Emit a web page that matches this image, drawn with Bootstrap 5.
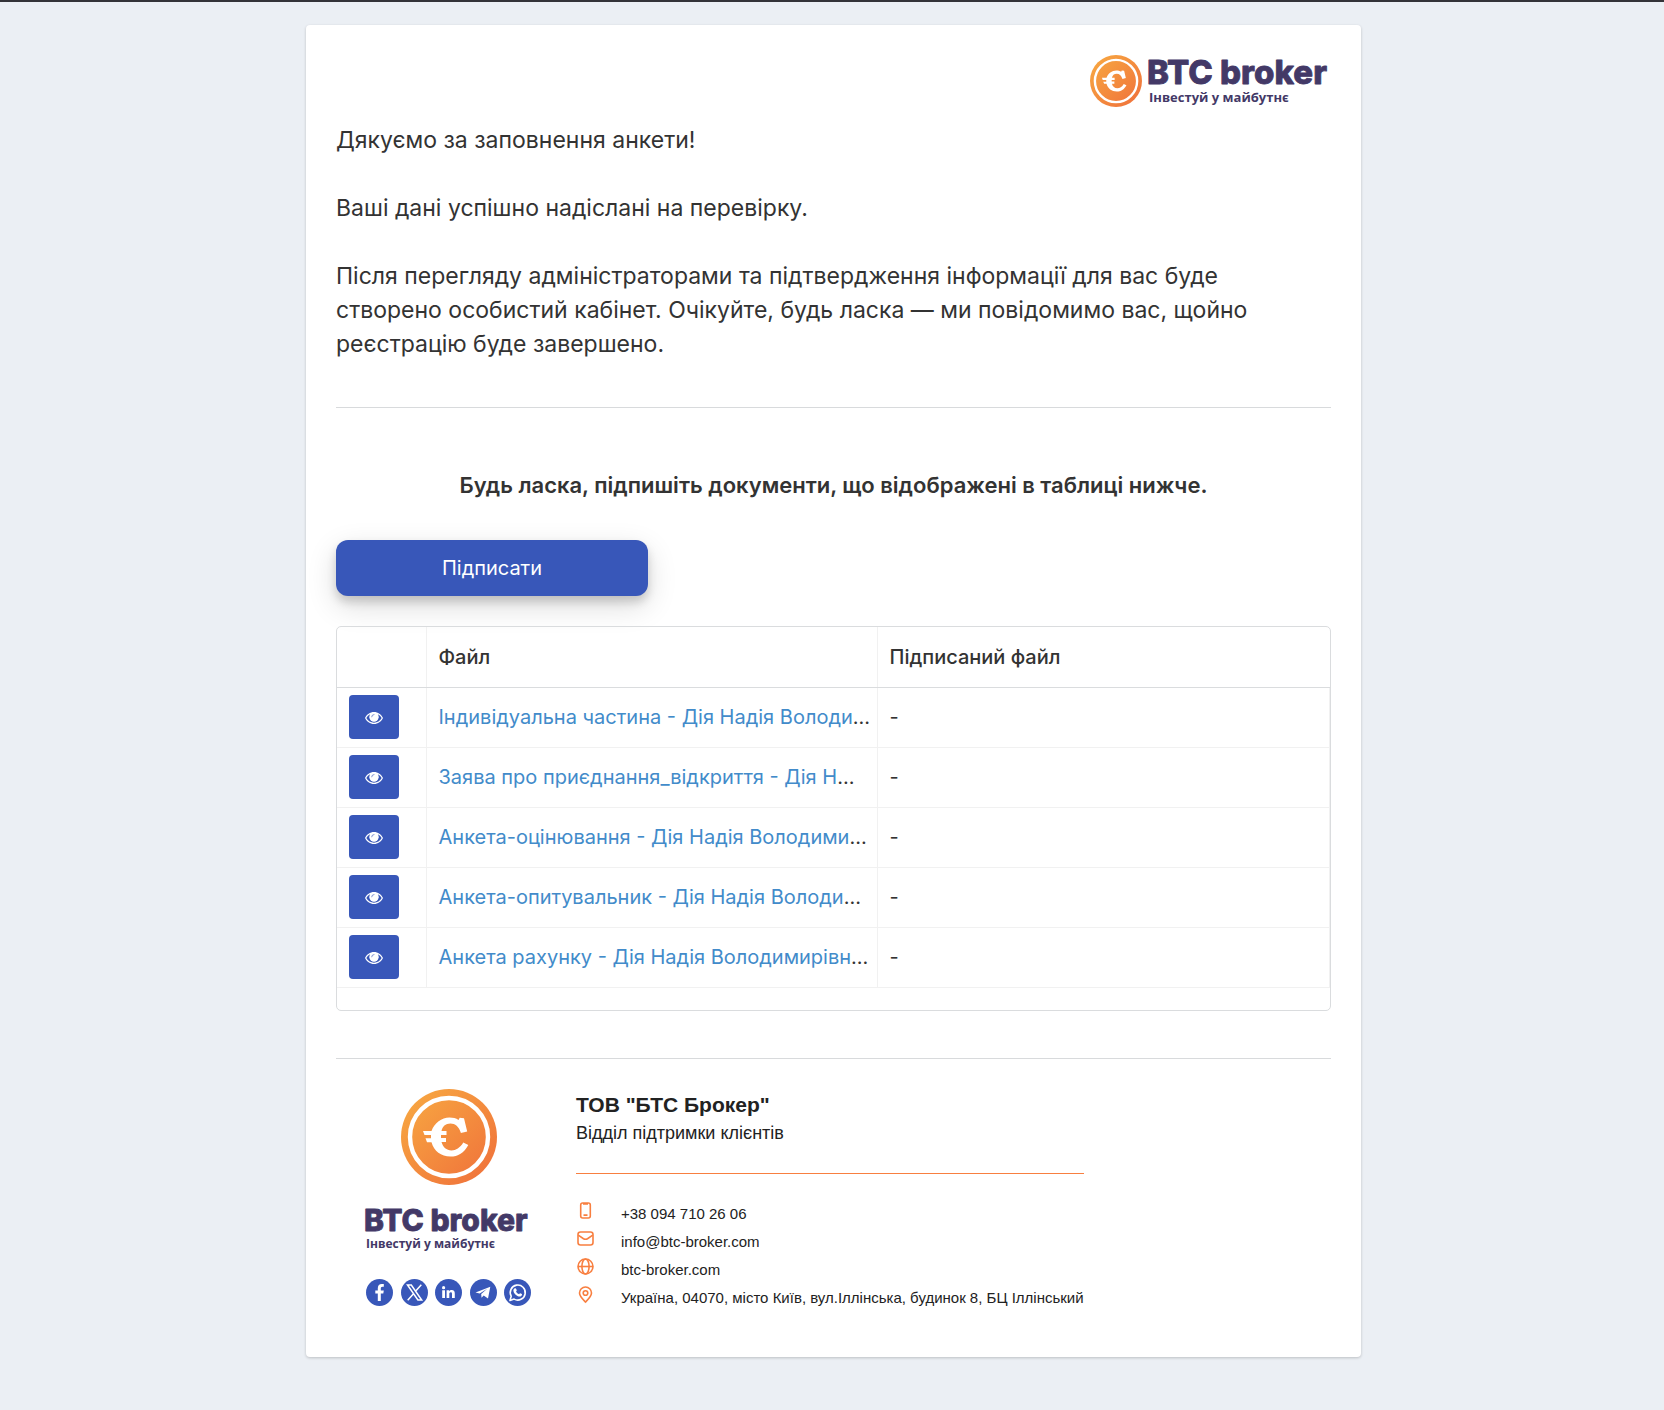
<!DOCTYPE html>
<html lang="uk">
<head>
<meta charset="utf-8">
<meta name="viewport" content="width=device-width, initial-scale=1">
<title>BTC broker</title>
<link href="https://cdn.jsdelivr.net/npm/bootstrap@5.3.0/dist/css/bootstrap.min.css" rel="stylesheet">
<style>
body{background:#ebeff4;color:#333;font-family:Inter,"Noto Sans",sans-serif;font-weight:400;border-top:2px solid #333338;min-height:100vh}
.page{padding:23px 22px 53px 25px}
.sheet{max-width:1055px;background:#fff;border-radius:4px;padding:30px 30px 45px;box-shadow:0 1px 3px rgba(0,0,0,.2)}
.intro{font-size:23px;line-height:34px;padding-top:14px;max-width:940px}
.intro p{margin-bottom:34px}
.rule{height:1px;border:0;margin:0;background:#d8dadc;opacity:1}
.intro + .rule{margin-top:46px}
.ask{font-size:22px;line-height:34px;font-weight:600;margin:60px 0 38px}
.btn-brand{background:#3857b9;color:#fff;border:0;font-weight:400}
.btn-brand:hover{background:#2d4799;color:#fff}
.btn-sign{width:312px;max-width:100%;height:56px;font-size:20px;border-radius:12px;margin-bottom:30px;box-shadow:0 10px 30px rgba(0,0,0,.14),0 6px 10px rgba(0,0,0,.16)}
.btn-eye{width:50px;height:44px;border-radius:4px;padding:0}
.btn-eye svg{margin-top:-2px}
.grid-box{border:1px solid #dadcde;border-radius:5px;padding-bottom:22px;margin-bottom:47px}
.files{table-layout:fixed;width:100%;font-size:20px;line-height:28px}
.files th,.files td{height:60px;padding:0 12px;border-bottom:1px solid #f1f1f1;border-right:1px solid #f1f1f1}
.files th:last-child{border-right:0}
.files th{font-weight:500;border-bottom-color:#dadcde}
.files a{color:#428bca;text-decoration:none}
.files .c-eye{width:89px}
.files .c-file{width:451px}
.logo{overflow:visible}
.wordmark{font-family:Inter,sans-serif;font-weight:800;fill:#433967;stroke:#433967;stroke-linejoin:round}
.tagline{font-family:"Open Sans",sans-serif;font-weight:700;fill:#433967}
.foot{padding:0 30px}
.brand-col{width:165px}
.contact{margin-left:45px;padding-top:8px;font-family:"Liberation Sans",Arial,sans-serif;font-weight:400;color:#222}
.contact h2{font-size:21px;line-height:28px;font-weight:700}
.contact .dept{font-size:18px;line-height:28px}
.contact .line{height:1px;background:#f87f40;margin:26px 0}
.contact li{font-size:15px;line-height:28px;gap:26px}
.contact li svg{flex:none;margin-top:-6px}
.contact li a{color:inherit;text-decoration:none}
</style>
<script src="https://cdn.jsdelivr.net/npm/bootstrap@5.3.0/dist/js/bootstrap.bundle.min.js"></script>
</head>
<body>
<svg width="0" height="0" class="position-absolute" aria-hidden="true">
<defs>
<linearGradient id="gold" x1="0" y1="0" x2="1" y2="1"><stop offset=".1" stop-color="#f7a541"/><stop offset=".9" stop-color="#f0743b"/></linearGradient>
<symbol id="coin" viewBox="0 0 96 96">
<circle cx="48" cy="48" r="48" fill="url(#gold)"/>
<circle cx="48" cy="48" r="39" fill="none" stroke="#fff" stroke-width="4.4"/>
<path fill="#fff" d="M22 42h8.500c3-8 10-13.500 18-13.500 3.500 0 6.500.8 9 2.400l1.200-2.200 4.300.5 3.200 13.300-6.300 1.600C58 37.500 54 34.500 49.500 34.500c-5 0-8.200 3-9 7.500h5v4H40v3h5v4h-4.500c1.400 5.200 5 8.400 10 8.400 4.400 0 8.500-2.500 11.800-7.900l5 2.400C63 64 57 67.500 49.500 67.500 40 67.500 33 62 30.500 53.200H26l-1.500-4H30V46h-6.500z"/>
</symbol>
<symbol id="eye" viewBox="0 0 18 12">
<path fill="#fff" fill-rule="evenodd" d="M9 0c4 0 7.300 2.500 9 6-1.700 3.500-5 6-9 6S1.700 9.500 0 6C1.700 2.500 5 0 9 0zM5.200 2.200C3.500 3 2.200 4.400 1.300 6c1.700 2.900 4.500 4.700 7.700 4.700s6-1.800 7.700-4.700c-.9-1.600-2.200-3-3.900-3.800.5.8.7 1.700.7 2.500a4.500 4.500 0 0 1-9 0c0-.8.2-1.700.7-2.500z"/>
<circle cx="9" cy="5.200" r="4.500" fill="#fff"/>
<path d="M6.700 4.800A2.300 2.300 0 0 1 9 2.500" fill="none" stroke="#3857b9" stroke-width=".6" stroke-linecap="round"/>
</symbol>
</defs>
</svg>
<main class="page">
<div class="sheet mx-auto">
<header class="d-flex justify-content-end">
<svg class="logo" width="242" height="54" viewBox="0 0 242 54" role="img" aria-label="BTC broker">
<use href="#coin" x="1" y="0" width="52" height="52"/>
<text class="wordmark" x="58" y="29" font-size="33" stroke-width=".8">BTC broker</text>
<text class="tagline" x="60" y="47" font-size="13">Інвестуй у майбутнє</text>
</svg>
</header>
<section class="intro">
<p>Дякуємо за заповнення анкети!</p>
<p>Ваші дані успішно надіслані на перевірку.</p>
<p class="mb-0">Після перегляду адміністраторами та підтвердження інформації для вас буде створено особистий кабінет. Очікуйте, будь ласка — ми повідомимо вас, щойно реєстрацію буде завершено.</p>
</section>
<hr class="rule">
<section>
<h1 class="ask text-center">Будь ласка, підпишіть документи, що відображені в таблиці нижче.</h1>
<button type="button" class="btn btn-brand btn-sign d-block">Підписати</button>
<div class="grid-box">
<table class="files">
<colgroup><col class="c-eye"><col class="c-file"><col></colgroup>
<thead><tr><th></th><th scope="col">Файл</th><th scope="col">Підписаний файл</th></tr></thead>
<tbody>
<tr><td><button type="button" class="btn btn-brand btn-eye" aria-label="Переглянути"><svg width="18" height="12"><use href="#eye"/></svg></button></td><td class="text-nowrap"><a href="#">Індивідуальна частина - Дія Надія Володи</a>...</td><td>-</td></tr>
<tr><td><button type="button" class="btn btn-brand btn-eye" aria-label="Переглянути"><svg width="18" height="12"><use href="#eye"/></svg></button></td><td class="text-nowrap"><a href="#">Заява про приєднання_відкриття - Дія Н</a>...</td><td>-</td></tr>
<tr><td><button type="button" class="btn btn-brand btn-eye" aria-label="Переглянути"><svg width="18" height="12"><use href="#eye"/></svg></button></td><td class="text-nowrap"><a href="#">Анкета-оцінювання - Дія Надія Володими</a>...</td><td>-</td></tr>
<tr><td><button type="button" class="btn btn-brand btn-eye" aria-label="Переглянути"><svg width="18" height="12"><use href="#eye"/></svg></button></td><td class="text-nowrap"><a href="#">Анкета-опитувальник - Дія Надія Володи</a>...</td><td>-</td></tr>
<tr><td><button type="button" class="btn btn-brand btn-eye" aria-label="Переглянути"><svg width="18" height="12"><use href="#eye"/></svg></button></td><td class="text-nowrap"><a href="#">Анкета рахунку - Дія Надія Володимирівн</a>...</td><td>-</td></tr>
</tbody>
</table>
</div>
</section>
<hr class="rule">
<footer class="foot d-flex flex-wrap">
<div class="brand-col d-flex flex-column">
<svg class="mx-auto mt-4" width="96" height="102" viewBox="0 0 96 102" aria-hidden="true"><use href="#coin" y="6" width="96" height="96"/></svg>
<svg class="logo mt-4" width="165" height="46" viewBox="0 0 165 46" role="img" aria-label="BTC broker"><text class="wordmark" x="-2" y="22" font-size="30" stroke-width=".8">BTC broker</text><text class="tagline" x="0" y="39" font-size="12">Інвестуй у майбутнє</text></svg>
<nav class="d-flex justify-content-between mt-4" aria-label="Соціальні мережі">
<a href="#" class="d-flex" aria-label="Facebook"><svg width="27" height="27" viewBox="0 0 27 27"><circle cx="13.500" cy="13.500" r="13.500" fill="#3857b9"/><path fill="#fff" d="M11.800 22v-7.500H9.300v-3h2.500V9.300c0-3 1.500-4.400 4-4.400.9 0 1.700.1 2 .2v2.600h-1.300c-1.300 0-1.700.7-1.700 1.800v2h3l-.5 3h-2.500V22z"/></svg></a>
<a href="#" class="d-flex" aria-label="X"><svg width="27" height="27" viewBox="0 0 27 27"><circle cx="13.500" cy="13.500" r="13.500" fill="#3857b9"/><path fill="none" stroke="#fff" stroke-width="1.500" d="M6.500 6h3.800l10.400 15h-3.800zM20.300 5.700l-6 6.800M12.500 14.700l-5.800 6.600"/></svg></a>
<a href="#" class="d-flex" aria-label="LinkedIn"><svg width="27" height="27" viewBox="0 0 27 27"><circle cx="13.500" cy="13.500" r="13.500" fill="#3857b9"/><circle cx="8.600" cy="8.700" r="1.600" fill="#fff"/><path fill="#fff" d="M7.200 11.300H10V19H7.200zM11.600 11.300h2.600v1.100c.5-.8 1.400-1.300 2.500-1.300 2.300 0 3.100 1.400 3.100 3.600V19H17v-3.900c0-1.200-.3-1.800-1.300-1.800s-1.400.7-1.400 1.800V19h-2.700z"/></svg></a>
<a href="#" class="d-flex" aria-label="Telegram"><svg width="27" height="27" viewBox="0 0 27 27"><circle cx="13.500" cy="13.500" r="13.500" fill="#3857b9"/><path fill="#fff" d="M5.500 13.600 20.300 7.700 18 19.500l-4.300-3.100-2.200 2.300-.3-3.700 6-5.300-7.500 4.900z"/></svg></a>
<a href="#" class="d-flex" aria-label="WhatsApp"><svg width="27" height="27" viewBox="0 0 27 27"><circle cx="13.500" cy="13.500" r="13.500" fill="#3857b9"/><path fill="none" stroke="#fff" stroke-width="1.600" stroke-linejoin="round" d="m6 21.400 1.200-4.200a7.500 7.500 0 1 1 2.900 2.900z"/><path fill="#fff" d="M11 9.300c.7-.2 1 0 1.200.6l.6 1.400c0 .5-.5.8-.8 1.200.8 1.400 1.700 2.100 3.100 2.700.4-.4.7-1 1.100-1l1.700.9c.4.300-.1 1.800-.9 2.200-3 1.400-7.800-3-7.600-6.100.1-.9.800-1.700 1.600-1.900z"/></svg></a>
</nav>
</div>
<div class="contact">
<h2 class="mb-0 mt-4">ТОВ "БТС Брокер"</h2>
<div class="dept">Відділ підтримки клієнтів</div>
<div class="line"></div>
<ul class="list-unstyled mb-0">
<li class="d-flex align-items-center"><svg width="19" height="19" viewBox="0 0 19 19" fill="none" stroke="#f87f40" stroke-width="1.600"><rect x="4.700" y="2" width="9.600" height="15" rx="2"/><path d="M7 2.800h5M7.500 14.200h4" stroke-width="1.800"/></svg><a href="#">+38 094 710 26 06</a></li>
<li class="d-flex align-items-center"><svg width="19" height="19" viewBox="0 0 19 19" fill="none" stroke="#f87f40" stroke-width="1.600"><rect x="2" y="3" width="15" height="13" rx="2.500"/><path d="M2.300 6.200 7.500 9.700q2 1.200 4 0l5.200-3.500"/></svg><a href="#">info@btc-broker.com</a></li>
<li class="d-flex align-items-center"><svg width="19" height="19" viewBox="0 0 19 19" fill="none" stroke="#f87f40" stroke-width="1.600"><circle cx="9.500" cy="9.500" r="7.500"/><ellipse cx="9.500" cy="9.500" rx="3.600" ry="7.500"/><path d="M2 9.500h15"/></svg><a href="#">btc-broker.com</a></li>
<li class="d-flex align-items-center"><svg width="19" height="19" viewBox="0 0 19 19" fill="none" stroke="#f87f40" stroke-width="1.600"><path d="M9.500 17C6.500 14 3.500 11.300 3.500 8a6 6 0 0 1 12 0c0 3.300-3 6-6 9z"/><circle cx="9.500" cy="8" r="2.300"/></svg><span>Україна, 04070, місто Київ, вул.Іллінська, будинок 8, БЦ Іллінський</span></li>
</ul>
</div>
</footer>
</div>
</main>
</body>
</html>
